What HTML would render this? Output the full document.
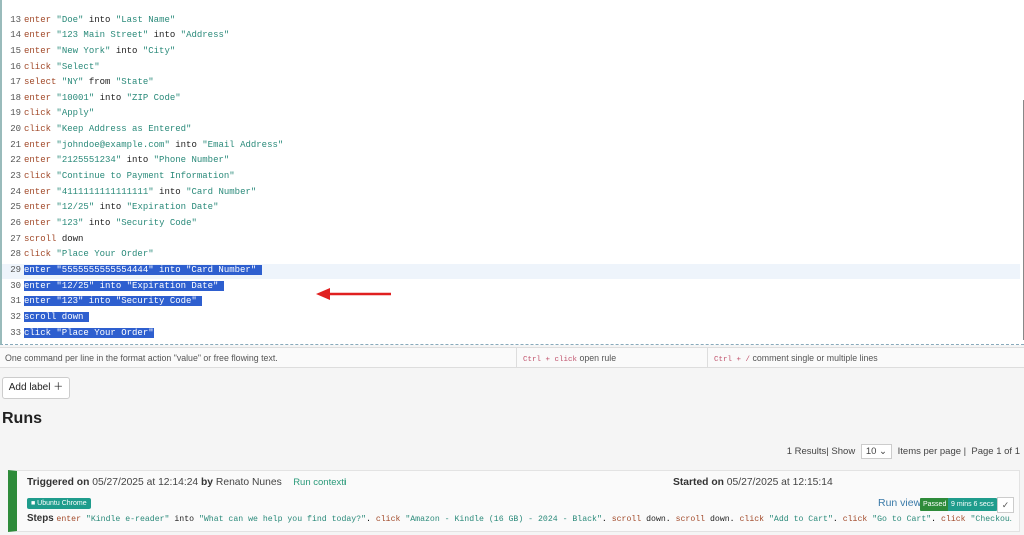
<!DOCTYPE html>
<html><head><meta charset="utf-8"><style>
*{margin:0;padding:0;box-sizing:border-box}
body{width:1024px;height:535px;overflow:hidden;background:#f5f5f5;font-family:"Liberation Sans",sans-serif;position:relative}
.ed{position:absolute;left:0;top:0;width:1024px;height:345px;background:#fff;border-left:2px solid #9bb;border-bottom:1px dashed #8ab}
.ln{position:absolute;left:0;width:1018px;height:15.65px;font-family:"Liberation Mono",monospace;font-size:9px;line-height:15.65px;white-space:pre}
.n{display:inline-block;width:22px;text-align:right;color:#555;padding-right:3px}
.k{color:#a24a2a}.s{color:#2a8a7a}.p{color:#222}
.sel{background:#2e5fcf;color:#fff}
.sb{position:absolute;left:1021px;top:100px;width:2px;height:240px;background:#888}
.help{position:absolute;top:347px;left:0;width:1024px;height:21px;border-top:1px solid #ddd;border-bottom:1px solid #ddd;background:#fafafa;font-size:8.8px;color:#555;line-height:20px}
.help span{position:absolute;top:0}
.c{font-family:"Liberation Mono",monospace;color:#c0506a;font-size:7.5px}
.btn{position:absolute;left:2px;top:377px;width:68px;height:22px;background:#fff;border:1px solid #ccc;border-radius:3px;font-size:10px;line-height:20px;text-align:center;color:#222}
h2{position:absolute;left:2px;top:410px;font-size:16px;font-weight:bold;color:#222}
.pg{position:absolute;top:444px;right:4px;font-size:9.5px;color:#444}
.sel2{display:inline-block;border:1px solid #ccc;background:#fff;padding:1px 4px;margin:0 3px}
.card{position:absolute;left:8px;top:470px;width:1012px;height:62px;background:#fafafa;border:1px solid #e3e3e3;border-left:9px solid #2e8b3a}
.t{position:absolute;font-size:10.3px;color:#444;white-space:nowrap}
.t b{color:#333}
.tag{position:absolute;left:10px;top:27px;height:11px;padding:0 4px;background:#1f9c8c;color:#fff;font-size:7px;line-height:11px;border-radius:2px}
.steps{position:absolute;left:10px;top:42px;font-size:9.8px;white-space:nowrap;width:985px;overflow:hidden}
.steps .m{font-family:"Liberation Mono",monospace;font-size:8.2px}
.bd{position:absolute;top:27px;height:13px;font-size:7px;color:#fff;line-height:13px;padding:0 3px;border-radius:1px}
</style></head><body>
<div class="ed">
<div style="position:absolute;left:0;top:264px;width:1018px;height:15px;background:#eef4fb"></div>
<div class="ln" style="top:12.5px"><span class="n">13</span><span class="k">enter</span> <span class="s">"Doe"</span> <span class="p">into</span> <span class="s">"Last Name"</span></div>
<div class="ln" style="top:28.1px"><span class="n">14</span><span class="k">enter</span> <span class="s">"123 Main Street"</span> <span class="p">into</span> <span class="s">"Address"</span></div>
<div class="ln" style="top:43.8px"><span class="n">15</span><span class="k">enter</span> <span class="s">"New York"</span> <span class="p">into</span> <span class="s">"City"</span></div>
<div class="ln" style="top:59.5px"><span class="n">16</span><span class="k">click</span> <span class="s">"Select"</span></div>
<div class="ln" style="top:75.1px"><span class="n">17</span><span class="k">select</span> <span class="s">"NY"</span> <span class="p">from</span> <span class="s">"State"</span></div>
<div class="ln" style="top:90.8px"><span class="n">18</span><span class="k">enter</span> <span class="s">"10001"</span> <span class="p">into</span> <span class="s">"ZIP Code"</span></div>
<div class="ln" style="top:106.4px"><span class="n">19</span><span class="k">click</span> <span class="s">"Apply"</span></div>
<div class="ln" style="top:122.1px"><span class="n">20</span><span class="k">click</span> <span class="s">"Keep Address as Entered"</span></div>
<div class="ln" style="top:137.7px"><span class="n">21</span><span class="k">enter</span> <span class="s">"johndoe@example.com"</span> <span class="p">into</span> <span class="s">"Email Address"</span></div>
<div class="ln" style="top:153.4px"><span class="n">22</span><span class="k">enter</span> <span class="s">"2125551234"</span> <span class="p">into</span> <span class="s">"Phone Number"</span></div>
<div class="ln" style="top:169px"><span class="n">23</span><span class="k">click</span> <span class="s">"Continue to Payment Information"</span></div>
<div class="ln" style="top:184.7px"><span class="n">24</span><span class="k">enter</span> <span class="s">"4111111111111111"</span> <span class="p">into</span> <span class="s">"Card Number"</span></div>
<div class="ln" style="top:200.3px"><span class="n">25</span><span class="k">enter</span> <span class="s">"12/25"</span> <span class="p">into</span> <span class="s">"Expiration Date"</span></div>
<div class="ln" style="top:216px"><span class="n">26</span><span class="k">enter</span> <span class="s">"123"</span> <span class="p">into</span> <span class="s">"Security Code"</span></div>
<div class="ln" style="top:231.6px"><span class="n">27</span><span class="k">scroll</span> <span class="p">down</span></div>
<div class="ln" style="top:247.3px"><span class="n">28</span><span class="k">click</span> <span class="s">"Place Your Order"</span></div>
<div class="ln" style="top:262.9px"><span class="n">29</span><span class="sel">enter "5555555555554444" into "Card Number" </span></div>
<div class="ln" style="top:278.6px"><span class="n">30</span><span class="sel">enter "12/25" into "Expiration Date" </span></div>
<div class="ln" style="top:294.2px"><span class="n">31</span><span class="sel">enter "123" into "Security Code" </span></div>
<div class="ln" style="top:309.9px"><span class="n">32</span><span class="sel">scroll down </span></div>
<div class="ln" style="top:325.5px"><span class="n">33</span><span class="sel">click "Place Your Order"</span></div>
<svg style="position:absolute;left:312px;top:287px" width="80" height="14"><line x1="12" y1="7" x2="77" y2="7" stroke="#e02020" stroke-width="2.5"/><polygon points="2,7 16,1 16,13" fill="#e02020"/></svg>
<div class="sb"></div>
</div>
<div class="help"><span style="left:5px">One command per line in the format action "value" or free flowing text.</span>
<span style="left:516px;border-left:1px solid #ddd;padding-left:6px;height:19px"><span class="c" style="position:static">Ctrl + click</span> open rule</span>
<span style="left:707px;border-left:1px solid #ddd;padding-left:6px;height:19px"><span class="c" style="position:static">Ctrl + /</span> comment single or multiple lines</span></div>
<div class="btn">Add label ＋</div>
<h2>Runs</h2>
<div class="pg">1 Results| Show <span class="sel2">10 ⌄</span> Items per page | &nbsp;Page 1 of 1</div>
<div class="card">
<div class="t" style="left:10px;top:6px"><b>Triggered on</b> 05/27/2025 at 12:14:24 <b>by</b> Renato Nunes &nbsp;&nbsp; <span style="color:#2a9a7a;font-size:9.5px">Run context<b style="color:#2a9a7a">i</b></span></div>
<div class="t" style="left:656px;top:6px"><b>Started on</b> 05/27/2025 at 12:15:14</div>
<div class="tag">■ Ubuntu Chrome</div>
<div class="t" style="left:861px;top:26px;color:#3a7aa8;font-size:10.5px">Run view</div>
<div class="bd" style="left:903px;background:#2e8b3a">Passed</div>
<div class="bd" style="left:931px;background:#1f9c8c">9 mins 6 secs</div>
<div style="position:absolute;left:980px;top:26px;width:17px;height:16px;border:1px solid #ccc;background:#fff;font-size:9px;text-align:center;line-height:14px;color:#555">✓</div>
<div class="steps"><b style="color:#333">Steps</b> <span class="m"><span class="k">enter</span> <span class="s">"Kindle e-reader"</span> <span class="p">into</span> <span class="s">"What can we help you find today?"</span>. <span class="k">click</span> <span class="s">"Amazon - Kindle (16 GB) - 2024 - Black"</span>. <span class="k">scroll</span> <span class="p">down</span>. <span class="k">scroll</span> <span class="p">down</span>. <span class="k">click</span> <span class="s">"Add to Cart"</span>. <span class="k">click</span> <span class="s">"Go to Cart"</span>. <span class="k">click</span> <span class="s">"Checkou…</span></span></div>
</div>
</body></html>
